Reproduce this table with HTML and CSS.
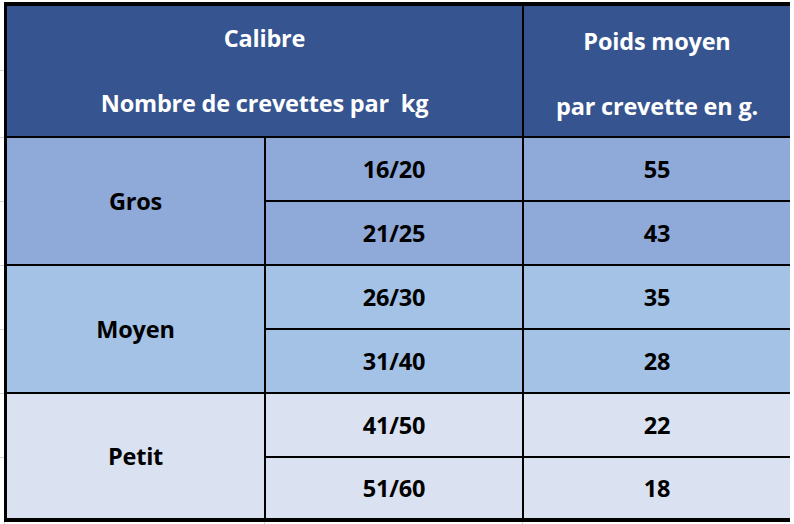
FILE: index.html
```html
<!DOCTYPE html>
<html>
<head>
<meta charset="utf-8">
<link rel="stylesheet" href="styles.css">
</head>
<body>
<div class="sheet">
  <div class="grid">
    <div class="cell head head-left">
      <div class="hline">Calibre</div>
      <div class="hline">Nombre de crevettes par&nbsp; kg</div>
    </div>
    <div class="cell head head-right">
      <div class="hline">Poids moyen</div>
      <div class="hline">par crevette en g.</div>
    </div>

    <div class="cell group gros">Gros</div>
    <div class="cell gros">16/20</div>
    <div class="cell gros">55</div>
    <div class="cell gros">21/25</div>
    <div class="cell gros">43</div>

    <div class="cell group moyen">Moyen</div>
    <div class="cell moyen">26/30</div>
    <div class="cell moyen">35</div>
    <div class="cell moyen">31/40</div>
    <div class="cell moyen">28</div>

    <div class="cell group petit">Petit</div>
    <div class="cell petit">41/50</div>
    <div class="cell petit">22</div>
    <div class="cell petit">51/60</div>
    <div class="cell petit">18</div>
  </div>
</div>
</body>
</html>
```

FILE: styles.css
```css
html, body {
  margin: 0;
  padding: 0;
  background: #ffffff;
}

body {
  font-family: "Open Sans", "Lato", "Liberation Sans", sans-serif;
  font-weight: 700;
}

.sheet {
  height: 522px;
  padding: 2px 0 0 4px;
  box-sizing: border-box;
  height: 524px;
  background-color: #ffffff;
  background-image:
    linear-gradient(#d6d6d6, #d6d6d6),
    linear-gradient(#d6d6d6, #d6d6d6),
    linear-gradient(#d6d6d6, #d6d6d6),
    linear-gradient(#d6d6d6, #d6d6d6),
    linear-gradient(#d6d6d6, #d6d6d6),
    linear-gradient(#d6d6d6, #d6d6d6),
    linear-gradient(#d6d6d6, #d6d6d6),
    linear-gradient(#d6d6d6, #d6d6d6),
    linear-gradient(#d6d6d6, #d6d6d6),
    linear-gradient(#d6d6d6, #d6d6d6);
  background-repeat: no-repeat;
  background-size:
    4px 1px, 4px 1px, 4px 1px, 4px 1px, 4px 1px, 4px 1px, 4px 1px,
    1px 2px, 1px 2px, 1px 2px;
  background-position:
    0 70px, 0 137px, 0 201px, 0 265px, 0 329px, 0 393px, 0 457px,
    4px 522px, 264px 522px, 522px 522px;
}

.grid {
  display: grid;
  width: 779px;
  background: #000000;
  padding: 4px 4px 4px 3px;
  gap: 2px;
  grid-template-columns: 257px 256px 266px;
  grid-template-rows: 130px 62px 62px 62px 62px 62px 60px;
}

.cell {
  display: flex;
  align-items: center;
  justify-content: center;
  font-size: 23.5px;
  letter-spacing: -0.2px;
  color: #000000;
}

.head {
  background: #36548f;
  color: #ffffff;
  flex-direction: column;
  justify-content: flex-start;
}

.head-left {
  grid-column: 1 / 3;
}

.head-right {
  padding-top: 3px;
}

.hline {
  height: 65px;
  line-height: 65px;
  white-space: pre;
}

.group {
  grid-row: span 2;
}

.gros { background: #8fa9d9; }
.moyen { background: #a3c2e6; }
.petit { background: #dae1f1; }
```
